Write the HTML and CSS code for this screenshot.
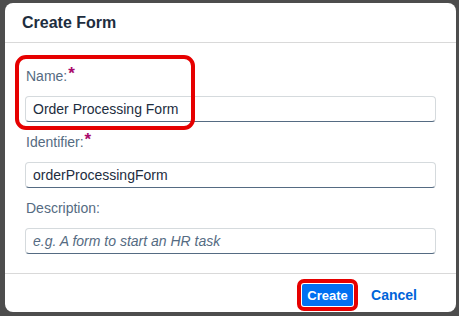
FILE: index.html
```html
<!DOCTYPE html>
<html lang="en">
<head>
 <meta charset="UTF-8">
 <title>Create Form</title>
 <link rel="stylesheet" href="styles.css">
</head>
<body>
 <div class="dialog">
 <div class="dialog-header">
 <h2 class="dialog-title">Create Form</h2>
 </div>
 <div class="dialog-content">
 <div class="field field-marked">
 <label class="field-label" for="formName">Name:<span class="required">*</span></label>
 <input type="text" id="formName" class="input" value="Order Processing Form">
 <span class="mark"></span>
 </div>
 <div class="field">
 <label class="field-label" for="formId">Identifier:<span class="required">*</span></label>
 <input type="text" id="formId" class="input" value="orderProcessingForm">
 </div>
 <div class="field">
 <label class="field-label" for="formDesc">Description:</label>
 <input type="text" id="formDesc" class="input" placeholder="e.g. A form to start an HR task">
 </div>
 </div>
 <div class="dialog-footer">
 <button class="btn btn-primary">Create</button>
 <button class="btn btn-link">Cancel</button>
 </div>
 </div>
</body>
</html>
```

FILE: styles.css
```css
* {
 margin: 0;
 padding: 0;
 box-sizing: border-box;
 font-family: "Liberation Sans", Arial, sans-serif;
}
body {
 width: 459px;
 height: 316px;
 background: #4d4d4d;
 padding: 3px 3px 0 5px;
 overflow: hidden;
}
.dialog {
 width: 451px;
 height: 309px;
 background: #fff;
 border-radius: 8px;
 display: flex;
 flex-direction: column;
}
.dialog-header {
 height: 40px;
 padding: 0 17px;
 display: flex;
 align-items: center;
 border-bottom: 1px solid #d9d9d9;
}
.dialog-title {
 font-size: 16px;
 font-weight: 700;
 color: #1d2d3e;
}
.dialog-content {
 padding: 24px 20px 0 20px;
 display: flex;
 flex-direction: column;
 gap: 11px;
 height: 231px;
 border-bottom: 1px solid #d9d9d9;
}
.field {
 position: relative;
 display: flex;
 flex-direction: column;
}
.field-label {
 font-size: 14px;
 line-height: 18px;
 color: #556b82;
 margin-bottom: 11px;
 padding-left: 1px;
}
.required {
 color: #aa0a6b;
 font-weight: 700;
 font-size: 17px;
 margin-left: 1px;
 position: relative;
 top: -2px;
}
.input {
 height: 26px;
 width: 411px;
 border: 1px solid #d5dadd;
 border-bottom-color: #556b82;
 border-radius: 4px;
 padding: 0 7px;
 font-size: 14px;
 color: #1d2d3e;
 background: #fff;
}
.input::placeholder {
 color: #556b82;
 font-style: italic;
}
.mark {
 position: absolute;
 left: -10px;
 top: -12px;
 width: 180px;
 height: 75px;
 border: 4px solid #e60000;
 border-radius: 11px;
}
.dialog-footer {
 flex: 1;
 display: flex;
 justify-content: flex-end;
 align-items: center;
 gap: 18px;
 padding: 4px 39px 0 0;
}
.btn {
 border: none;
 background: none;
 font-size: 13px;
 font-weight: 700;
 cursor: pointer;
}
.btn-primary {
 width: 51px;
 height: 22px;
 background: #0070f2;
 color: #fff;
 border-radius: 2px;
 outline: 4px solid #e60000;
 outline-offset: 1px;
}
.btn-link {
 color: #0064d9;
 font-size: 14px;
}
```
